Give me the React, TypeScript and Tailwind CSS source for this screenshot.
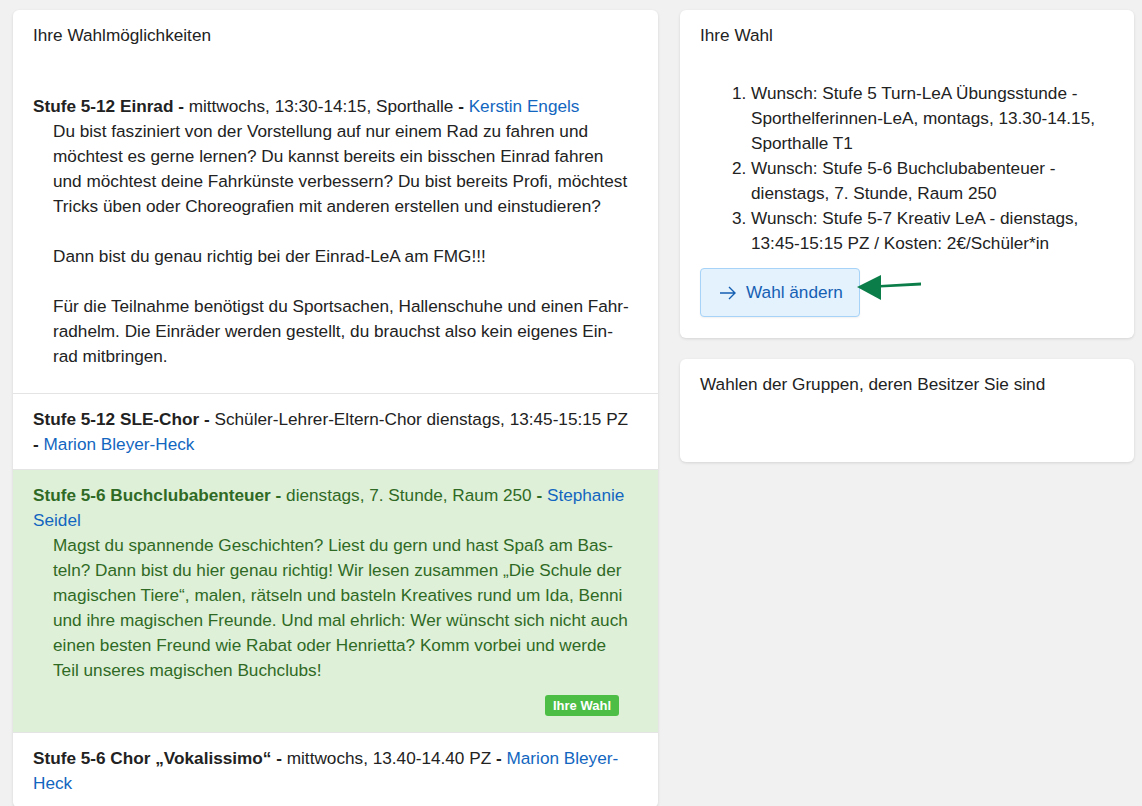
import React from "react";

const font = { fontFamily: '"Liberation Sans", Arial, sans-serif' };

interface ItemProps {
  title: string;
  info: string;
  teacher: string;
  paragraphs?: React.ReactNode[];
  chosen?: boolean;
  first?: boolean;
}

function OptionItem({ title, info, teacher, paragraphs, chosen, first }: ItemProps) {
  return (
    <div
      className={
        "px-5 pt-[13px] pb-3 " +
        (first ? "" : "border-t border-[#e4e4e4] ") +
        (chosen ? "bg-[#dff0d8] text-[#2f6a25]" : "text-[#222]")
      }
    >
      <p>
        <b>{title} -</b> {info} <b>-</b>{" "}
        <a className="text-[#1266c0]">{teacher}</a>
      </p>
      {paragraphs && (
        <div className="ml-5">
          {paragraphs.map((p, i) => (
            <p key={i} className={i < paragraphs.length - 1 ? "mb-[25px]" : "mb-3"}>
              {p}
            </p>
          ))}
        </div>
      )}
      {chosen && (
        <div className="mt-[3px] mb-[4px] flex justify-end pr-[19px]">
          <span className="h-[21px] rounded-[3px] bg-[#4cbd45] px-[8px] text-[13px] font-bold leading-[21px] text-white">
            Ihre Wahl
          </span>
        </div>
      )}
    </div>
  );
}

export default function App() {
  return (
    <div
      style={font}
      className="min-h-screen bg-[#f1f1f1] pl-[13px] pr-[8px] pt-[10px] text-[17.2px] leading-[25px] text-[#222]"
    >
      <div className="flex items-start gap-[22px]">
        <div className="flex-1 overflow-hidden rounded-md bg-white shadow-[0_1px_3px_rgba(0,0,0,0.12)]">
          <div className="h-[71px] px-5 pt-[13px]">Ihre Wahlmöglichkeiten</div>
          <div>
            <OptionItem
              first
              title="Stufe 5-12 Einrad"
              info="mittwochs, 13:30-14:15, Sporthalle"
              teacher="Kerstin Engels"
              paragraphs={[
                <>
                  Du bist fasziniert von der Vorstellung auf nur einem Rad zu fahren und möchtest es gerne
                  lernen? Du kannst bereits ein bisschen Einrad fahren
                  <br />
                  und möchtest deine Fahrkünste verbessern? Du bist bereits Profi, möchtest Tricks üben oder
                  Choreografien mit anderen erstellen und einstudieren?
                </>,
                "Dann bist du genau richtig bei der Einrad-LeA am FMG!!!",
                <>
                  Für die Teilnahme benötigst du Sportsachen, Hallenschuhe und einen Fahr{"\u00AD"}radhelm. Die
                  Einräder werden gestellt, du brauchst also kein eigenes Ein-
                  <br />
                  rad mitbringen.
                </>,
              ]}
            />
            <OptionItem
              title="Stufe 5-12 SLE-Chor"
              info="Schüler-Lehrer-Eltern-Chor dienstags, 13:45-15:15 PZ"
              teacher="Marion Bleyer-Heck"
            />
            <OptionItem
              chosen
              title="Stufe 5-6 Buchclubabenteuer"
              info="dienstags, 7. Stunde, Raum 250"
              teacher="Stephanie Seidel"
              paragraphs={[
                <>
                  Magst du spannende Geschichten? Liest du gern und hast Spaß am Bas{"\u00AD"}teln? Dann bist du
                  hier genau richtig! Wir lesen zusammen „Die Schule der magischen Tiere“, malen, rätseln und
                  basteln Kreatives rund um Ida, Benni und ihre magischen Freunde. Und mal ehrlich: Wer wünscht
                  sich nicht auch einen besten Freund wie Rabat oder Henrietta? Komm vorbei und werde
                  <br />
                  Teil unseres magischen Buchclubs!
                </>,
              ]}
            />
            <OptionItem
              title="Stufe 5-6 Chor „Vokalissimo“"
              info="mittwochs, 13.40-14.40 PZ"
              teacher="Marion Bleyer-Heck"
            />
          </div>
        </div>

        <div className="flex w-[454px] flex-col gap-[21px]">
          <div className="relative rounded-md bg-white px-5 pt-[13px] pb-[21px] shadow-[0_1px_3px_rgba(0,0,0,0.12)]">
            <div>Ihre Wahl</div>
            <ol className="mt-[33px] list-decimal pl-[51px]">
              <li>
                Wunsch: Stufe 5 Turn-LeA Übungsstunde - Sporthelferinnen-LeA, montags, 13.30-14.15,
                Sporthalle T1
              </li>
              <li>Wunsch: Stufe 5-6 Buchclubabenteuer - dienstags, 7. Stunde, Raum 250</li>
              <li>Wunsch: Stufe 5-7 Kreativ LeA - dienstags, 13:45-15:15 PZ / Kosten: 2€/Schüler*in</li>
            </ol>
            <button className="mt-[12px] flex h-[49px] w-[160px] items-center gap-[10px] rounded-[4px] border border-[#a6d3f7] bg-[#e4f2fe] pl-[18px] text-[#1560b3] shadow-[0_1px_2px_rgba(0,0,0,0.06)]">
              <svg width="17" height="14" viewBox="0 0 17 14" fill="none" stroke="currentColor" strokeWidth="1.4">
                <path d="M1 7h15M10 1l6 6-6 6" />
              </svg>
              <span>Wahl ändern</span>
            </button>
            <svg
              className="absolute left-[175px] top-[263px]"
              width="70"
              height="32"
              viewBox="0 0 70 32"
            >
              <path d="M66 9.5 L25 12 L25 14.5 L66 12.5 Z" fill="#0b7d48" />
              <path d="M2 14 L26 2 L26 27 Z" fill="#0b7d48" />
            </svg>
          </div>
          <div className="h-[103px] rounded-md bg-white px-5 pt-[13px] shadow-[0_1px_3px_rgba(0,0,0,0.12)]">
            Wahlen der Gruppen, deren Besitzer Sie sind
          </div>
        </div>
      </div>
    </div>
  );
}
